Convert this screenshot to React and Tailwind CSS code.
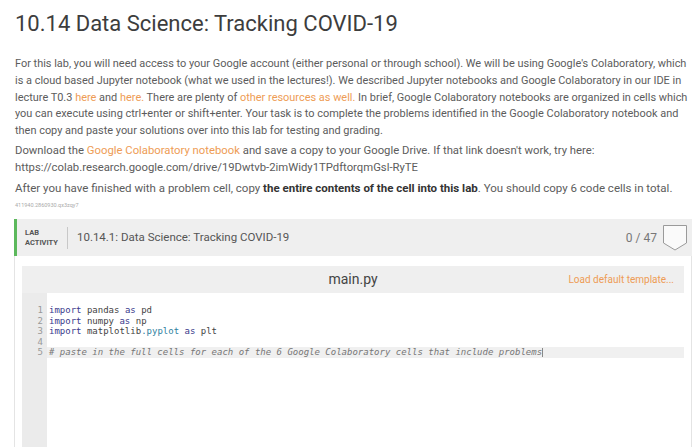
const Link = ({ children }) => <span className="text-[#ee9c55]">{children}</span>;

const kw = (t, k) => <span key={k} className="text-[#3a3a8c]">{t}</span>;

const codeLines = [
    [kw('import', 'a'), ' pandas ', kw('as', 'b'), ' pd'],
    [kw('import', 'a'), ' numpy ', kw('as', 'b'), ' np'],
    [kw('import', 'a'), ' matplotlib', <span key="c" className="text-[#2f7f9f]">.pyplot</span>, ' ', kw('as', 'b'), ' plt'],
    [''],
    [<span key="a" className="italic text-[#777]"># paste in the full cells for each of the 6 Google Colaboratory cells that include problems</span>]
];

const App = () => {
    return (
        <div className="w-[700px] h-[447px] overflow-hidden bg-white pl-[15px] pr-[8px] pt-[10px] font-['Roboto',sans-serif]">
            <h1 className="text-[22px] leading-[28px] text-[#3d3d3d]">10.14 Data Science: Tracking COVID-19</h1>

            <div className="mt-[18px] leading-[16.75px] text-[#5c5c5c] whitespace-nowrap">
                <p className="text-[10.95px]">
                    For this lab, you will need access to your Google account (either personal or through school). We will be using Google's Colaboratory, which<br />
                    is a cloud based Jupyter notebook (what we used in the lectures!). We described Jupyter notebooks and Google Colaboratory in our IDE in<br />
                    lecture T0.3 <Link>here</Link> and <Link>here.</Link> There are plenty of <Link>other resources as well.</Link> In brief, Google Colaboratory notebooks are organized in cells which<br />
                    you can execute using ctrl+enter or shift+enter. Your task is to complete the problems identified in the Google Colaboratory notebook and<br />
                    then copy and paste your solutions over into this lab for testing and grading.
                </p>
                <p className="mt-[3px] text-[11.3px]">
                    Download the <Link>Google Colaboratory notebook</Link> and save a copy to your Google Drive. If that link doesn't work, try here:<br />
                    https://colab.research.google.com/drive/19Dwtvb-2imWidy1TPdftorqmGsl-RyTE
                </p>
                <p className="mt-[4px] text-[11.5px]">
                    After you have finished with a problem cell, copy <b className="font-bold text-[#333]">the entire contents of the cell into this lab</b>. You should copy 6 code cells in total.
                </p>
                <p className="mt-[3px] text-[5.5px] leading-[10px] text-[#aaa]">411940.2860930.qx3zqy7</p>
            </div>

            {/* Lab activity */}
            <div className="mt-[9px] -ml-[1px]">
                <div className="h-[37px] bg-[#efefef] border-l-[3px] border-[#5cb85c] flex items-center pl-[8px] pr-[5px]">
                    <div className="text-[7.5px] leading-[10px] font-bold text-[#555] uppercase">
                        <div>Lab</div>
                        <div>Activity</div>
                    </div>
                    <div className="w-px h-[22px] bg-[#c8c8c8] ml-[9px] mr-[9px]" />
                    <div className="text-[11.5px] text-[#555]">10.14.1: Data Science: Tracking COVID-19</div>
                    <div className="ml-auto text-[12px] text-[#777] mr-[6px]">0 / 47</div>
                    <svg width="24" height="26" viewBox="0 0 24 26">
                        <path d="M0.5 0.5 H23.5 V18 L12 25 L0.5 18 Z" fill="#fafafa" stroke="#9a9a9a" strokeWidth="1" />
                    </svg>
                </div>

                <div className="border-l border-r border-[#e4e4e4] px-[7px] pt-[10px] pb-[20px]">
                    <div className="h-[27px] bg-[#efefef] relative flex items-center justify-center">
                        <span className="text-[14px] text-[#444]">main.py</span>
                        <span className="absolute right-[10px] text-[10px] text-[#ee9c55]">Load default template...</span>
                    </div>
                    <div className="flex h-[200px] font-['DejaVu_Sans_Mono',monospace] text-[9px] leading-[10.5px]">
                        <div className="w-[25px] bg-[#ebebeb] pt-[12px] pr-[4px] text-right text-[#999]">
                            {codeLines.map((_, i) => <div key={i} className="h-[10.5px]">{i + 1}</div>)}
                        </div>
                        <div className="flex-1 pt-[12px] text-[#444] whitespace-pre">
                            {codeLines.map((l, i) => (
                                <div key={i} className={`h-[10.5px] pl-[2px] ${i === 4 ? 'bg-[#f0f0f0]' : ''}`}>
                                    {l}{i === 4 && <span className="inline-block w-px h-[9px] bg-[#888] align-middle" />}
                                </div>
                            ))}
                        </div>
                    </div>
                </div>
            </div>
        </div>
    );
};

export default App;
